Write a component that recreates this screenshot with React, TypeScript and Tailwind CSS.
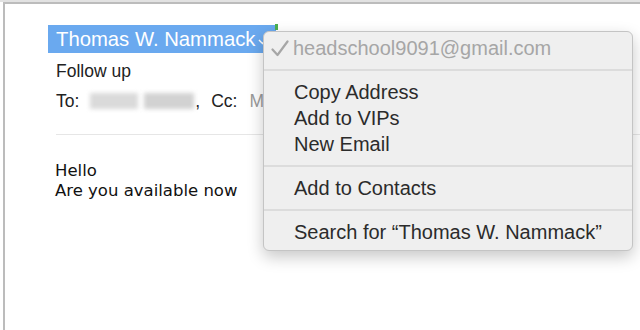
import React from "react";

const menuRow = "h-[26px] flex items-center pl-[30px] leading-none";

const Separator = () => <div className="h-[2px] my-[8px] bg-[#dcdcdc]" />;

const ContactMenu: React.FC = () => {
  return (
    <div className="absolute left-[263px] top-[31px] w-[370px] rounded-[6px] border border-[#c4c4c4] bg-[#efefef] pt-[3px] pb-[5px] text-[20px] text-[#2b2b2b] shadow-[0_6px_16px_rgba(0,0,0,0.22)] font-['Liberation_Sans',Arial,sans-serif]">
      <div className="h-[26px] flex items-center leading-none text-[#a6a6a6]">
        <span className="w-[29px] flex justify-center pl-[2px]">
          <svg width="18" height="17" viewBox="0 0 18 17">
            <path d="M1.5 9.5 L6.5 15 L16.5 1.5" fill="none" stroke="#a6a6a6" strokeWidth="2.2" strokeLinecap="round" strokeLinejoin="round" />
          </svg>
        </span>
        <span>headschool9091@gmail.com</span>
      </div>
      <Separator />
      <div className={menuRow}>Copy Address</div>
      <div className={menuRow}>Add to VIPs</div>
      <div className={menuRow}>New Email</div>
      <Separator />
      <div className={menuRow}>Add to Contacts</div>
      <Separator />
      <div className={menuRow}>Search for “Thomas W. Nammack”</div>
    </div>
  );
};

export default function App() {
  return (
    <div className="relative h-[330px] w-[640px] overflow-hidden bg-white">
      <div className="h-[2px] bg-[#e2e2e2]" />
      <div className="flex h-[328px]">
        <div className="w-[3px]" />
        <div className="flex-1 border-l-2 border-t-2 border-[#bcbcbc] pl-[43px] pt-[21px]">
          {/* sender chip */}
          <div className="relative flex h-[28px] w-[228px] items-center bg-[#6aa9ef] pl-[8px] text-[20.3px] leading-none text-white font-['Liberation_Sans',Arial,sans-serif]">
            <span>Thomas W. Nammack</span>
            <svg className="ml-[3px] mt-[6px]" width="9" height="6" viewBox="0 0 9 6">
              <path d="M1 1 L4.5 4.5 L8 1" fill="none" stroke="#ffffff" strokeWidth="1.4" />
            </svg>
            <div className="absolute right-[-2px] top-[-1px] h-[6px] w-[3px] bg-[#4caf50]" />
          </div>

          <div className="pl-[8px] font-['Liberation_Sans',Arial,sans-serif] text-[17.5px] text-[#222]">
            <div className="mt-[6px] h-[24px] leading-[24px]">Follow up</div>
            <div className="mt-[6px] flex h-[24px] items-center leading-[24px]">
              <span>To:</span>
              <span className="ml-[11px] flex items-center gap-[6px]">
                <span className="h-[16px] w-[48px] bg-[#dadada] blur-[2px]" />
                <span className="h-[16px] w-[50px] bg-[#d2d2d2] blur-[2px]" />
              </span>
              <span className="ml-[1px]">,</span>
              <span className="ml-[11px]">Cc:</span>
              <span className="ml-[12px] text-[#9a9a9a]">M</span>
            </div>
          </div>

          <div className="ml-[8px] mt-[21px] h-px bg-[#e6e6e6]" />

          <div className="mt-[26px] pl-[7px] font-['DejaVu_Sans',Verdana,sans-serif] text-[16.5px] leading-[20px] text-[#111]">
            <div>Hello</div>
            <div>Are you available now</div>
          </div>
        </div>
      </div>

      <ContactMenu />
    </div>
  );
}
